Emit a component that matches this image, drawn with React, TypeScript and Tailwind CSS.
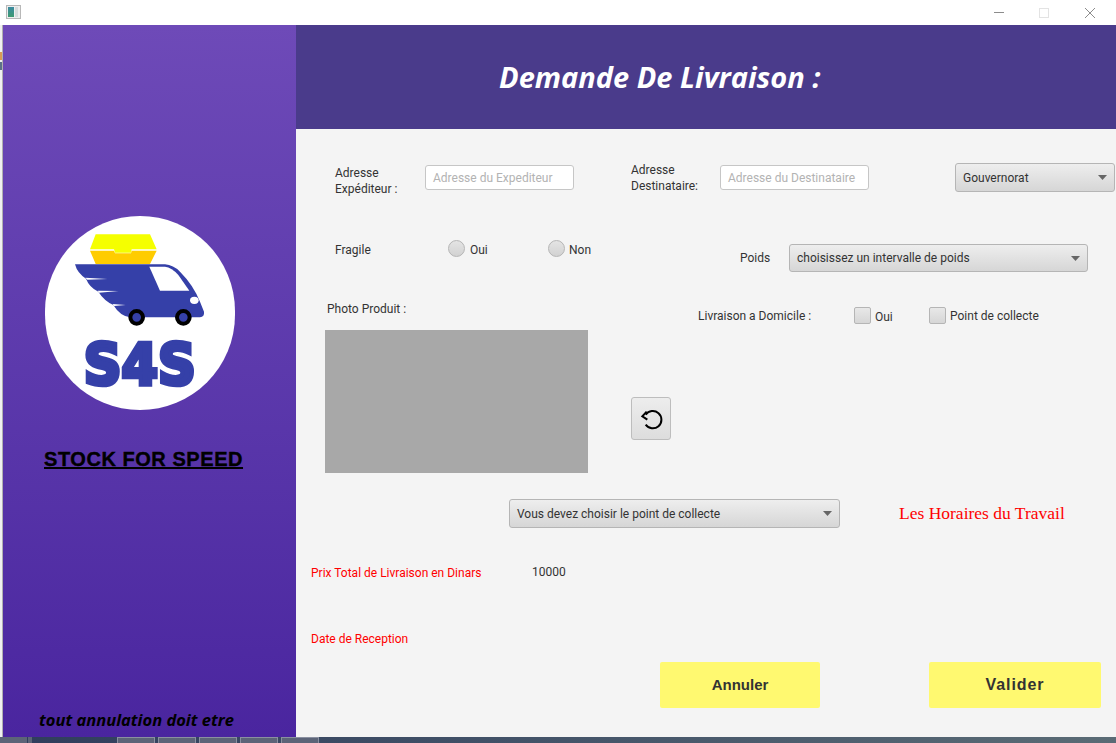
import { ReactNode } from 'react'

function Select({ label, className }: { label: string; className: string }) {
  return (
    <div className={`flex items-center justify-between pl-[7px] pr-[7px] border border-[#b5b5b5] rounded-[3px] bg-gradient-to-b from-[#eeeeee] to-[#d6d6d6] text-[#333333] ${className}`}>
      <span>{label}</span>
      <svg width="9" height="5" viewBox="0 0 9 5"><path d="M0 0h9L4.5 5z" fill="#666666" /></svg>
    </div>
  )
}

function Radio() {
  return <span className="block w-[17px] h-[17px] rounded-full border border-[#b5b5b5] bg-gradient-to-b from-[#e4e4e4] to-[#d2d2d2]" />
}

function Check() {
  return <span className="block w-[17px] h-[17px] rounded-[2px] border border-[#b5b5b5] bg-gradient-to-b from-[#e8e8e8] to-[#d6d6d6]" />
}

function Input({ placeholder }: { placeholder: string }) {
  return (
    <div className="w-[149px] h-[25px] mt-[2px] flex items-center px-[7px] bg-white border border-[#c6c6c6] rounded-[3px] text-[#b3b3b3] whitespace-nowrap">
      {placeholder}
    </div>
  )
}

function Tab({ children }: { children?: ReactNode }) {
  return <div className="w-[38px] h-full mr-[3px] bg-[#5c6478] border-t border-x border-[#8a90a0]">{children}</div>
}

function Logo() {
  return (
    <div className="w-[190px] h-[194px] ml-[42px] rounded-full bg-white">
      <svg width="190" height="194" viewBox="45 18 570 582">
        <path d="M197 73H360L380 118H305L303 128H255L252 118H180Z" fill="#f5ff00" />
        <path d="M180 122H252L255 130H303L305 122H380L360 162H197Z" fill="#ffcc00" />
        <path
          d="M135 163H405Q430 165 450 185Q490 225 510 275L522 305Q524 320 510 322H300Q270 318 250 285Q222 272 205 245Q178 232 168 206Q142 190 135 163Z"
          fill="#3540a8"
        />
        <path d="M166 203L232 207L172 209Z M203 242L266 243L207 248Z M248 282L287 285L252 288Z" fill="#ffffff" />
        <path d="M358 170H405Q425 172 445 195L478 242H390Z" fill="#ffffff" />
        <ellipse cx="493" cy="271" rx="13" ry="11" fill="#ffffff" />
        <circle cx="320" cy="322" r="19" fill="#3540a8" stroke="#000000" strokeWidth="12" />
        <circle cx="460" cy="322" r="19" fill="#3540a8" stroke="#000000" strokeWidth="12" />
        <text
          x="161"
          y="524"
          textLength="336"
          lengthAdjust="spacingAndGlyphs"
          fontFamily="'DejaVu Sans', sans-serif"
          fontWeight="700"
          fontSize="172"
          fill="#3540a8"
          stroke="#3540a8"
          strokeWidth="14"
        >
          S4S
        </text>
      </svg>
    </div>
  )
}

export default function App() {
  return (
    <div className="w-[1116px] h-[743px] flex flex-col overflow-hidden bg-white text-[12px] font-['Roboto',sans-serif]">
      {/* title bar */}
      <div className="h-[25px] flex items-center justify-between bg-white">
        <div className="ml-[6px] mb-[1px] w-[15px] h-[14px] flex border border-[#b8b8b8] bg-[#eeeeee] p-[1px]">
          <span className="block w-[6px] h-full bg-gradient-to-b from-[#3c8aa0] to-[#3f9a70]" />
          <span className="block w-[3px] h-full ml-[1px] bg-[#d5dcdc]" />
        </div>
        <div className="flex items-center">
          <span className="block w-[10px] h-px bg-[#8c8c8c]" />
          <span className="block w-[10px] h-[10px] ml-[35px] border border-[#e3e3e3]" />
          <svg className="ml-[36px] mr-[21px]" width="10" height="10" viewBox="0 0 10 10">
            <path d="M0 0L10 10M10 0L0 10" stroke="#8c8c8c" strokeWidth="1" fill="none" />
          </svg>
        </div>
      </div>

      <div className="flex-1 flex min-h-0">
        {/* sliver of the window behind */}
        <div className="w-[3px] flex flex-col border-r border-[#b0b0b0] bg-[#f0f0f0]">
          <span className="block h-[8px] mt-[27px] bg-[#d99a55]" />
          <span className="block h-[8px] mt-[2px] bg-[#5d7288]" />
        </div>

        {/* sidebar */}
        <div className="w-[293px] flex flex-col pt-[191px] bg-gradient-to-b from-[#6e4ab8] to-[#4a259f]">
          <Logo />
          <div className="ml-[41px] mt-[37px] font-['Liberation_Sans',sans-serif] font-bold text-[20px] tracking-[0.55px] leading-[24px] underline text-black [-webkit-text-stroke:0.4px_black]">
            STOCK FOR SPEED
          </div>
          <div className="ml-[36px] mt-auto mb-[6px] font-['Open_Sans',sans-serif] font-bold italic text-[16.5px] leading-[22px] text-black">
            tout annulation doit etre
          </div>
        </div>

        {/* main */}
        <div className="flex-1 flex flex-col">
          <div className="h-[104px] flex items-center bg-[#4a3b8b]">
            <h1 className="ml-[203px] font-['Open_Sans',sans-serif] font-bold italic text-[29px] text-white">Demande De Livraison :</h1>
          </div>

          <div className="flex-1 flex flex-col bg-[#f4f4f4] text-[#333333]">
            {/* adresses */}
            <div className="flex items-start mt-[34px] h-[29px]">
              <div className="ml-[39px] w-[90px] mt-[2px] leading-[16px]">Adresse<br />Expéditeur :</div>
              <Input placeholder="Adresse du Expediteur" />
              <div className="ml-[57px] w-[89px] mt-[-1px] leading-[16px]">Adresse<br />Destinataire:</div>
              <Input placeholder="Adresse du Destinataire" />
              <Select label="Gouvernorat" className="ml-[86px] w-[160px] h-[29px]" />
            </div>

            {/* fragile + poids */}
            <div className="flex items-start mt-[48px] h-[32px]">
              <div className="ml-[39px] w-[113px] mt-[2px] leading-[16px]">Fragile</div>
              <Radio />
              <span className="ml-[5px] w-[78px] mt-[2px] leading-[16px]">Oui</span>
              <Radio />
              <span className="ml-[4px] w-[171px] mt-[2px] leading-[16px]">Non</span>
              <span className="w-[49px] mt-[10px] leading-[16px]">Poids</span>
              <Select label="choisissez un intervalle de poids" className="w-[299px] h-[28px] mt-[4px]" />
            </div>

            {/* photo + livraison */}
            <div className="flex items-start mt-[35px] h-[23px]">
              <span className="ml-[31px] w-[371px] mt-[-6px] leading-[16px]">Photo Produit :</span>
              <span className="w-[156px] mt-[1px] leading-[16px]">Livraison a Domicile :</span>
              <Check />
              <span className="ml-[4px] w-[54px] mt-[2px] leading-[16px]">Oui</span>
              <Check />
              <span className="ml-[4px] mt-[1px] leading-[16px]">Point de collecte</span>
            </div>

            <div className="flex items-start">
              <div className="ml-[29px] w-[263px] h-[143px] bg-[#a8a8a8]" />
              <button className="ml-[43px] mt-[67px] w-[40px] h-[43px] flex items-center justify-center border border-[#bdbdbd] rounded-[3px] bg-gradient-to-b from-[#ededed] to-[#dddddd]">
                <svg width="24" height="24" viewBox="27 34 72 72" fill="none" stroke="#000000" strokeWidth="6">
                  <path d="M47 57A26 26 0 1 1 47 87" />
                  <path d="M50 48L37 62L52 72" />
                </svg>
              </button>
            </div>

            <div className="flex items-center mt-[26px]">
              <Select label="Vous devez choisir le point de collecte" className="ml-[213px] w-[331px] h-[29px]" />
              <span className="ml-[59px] font-['Liberation_Serif',serif] text-[17.5px] text-[#ff0000]">Les Horaires du Travail</span>
            </div>

            <div className="flex mt-[37px] leading-[16px]">
              <span className="ml-[15px] w-[221px] text-[#ff0000]">Prix Total de Livraison en Dinars</span>
              <span className="mt-[-1px]">10000</span>
            </div>

            <div className="ml-[15px] mt-[50px] leading-[16px] text-[#ff0000]">Date de Reception</div>

            <div className="flex mt-[15px] font-['Liberation_Sans',sans-serif] font-bold text-[15px] text-[#333333]">
              <button className="ml-[364px] w-[160px] h-[46px] rounded-[2px] bg-[#fff970]">Annuler</button>
              <button className="ml-[109px] w-[172px] h-[46px] rounded-[2px] bg-[#fff970] text-[16px] tracking-[0.9px]">Valider</button>
            </div>
          </div>
        </div>
      </div>

      {/* desktop strip behind the window */}
      <div className="h-[6px] flex bg-gradient-to-r from-[#2f3d5c] to-[#5a6b75]">
        <div className="w-[27px] h-full mr-[1px] bg-[#5c6478]" />
        <div className="w-[4px] h-full mr-[85px] bg-[#5c6478]" />
        <Tab /><Tab /><Tab /><Tab /><Tab />
      </div>
    </div>
  )
}
